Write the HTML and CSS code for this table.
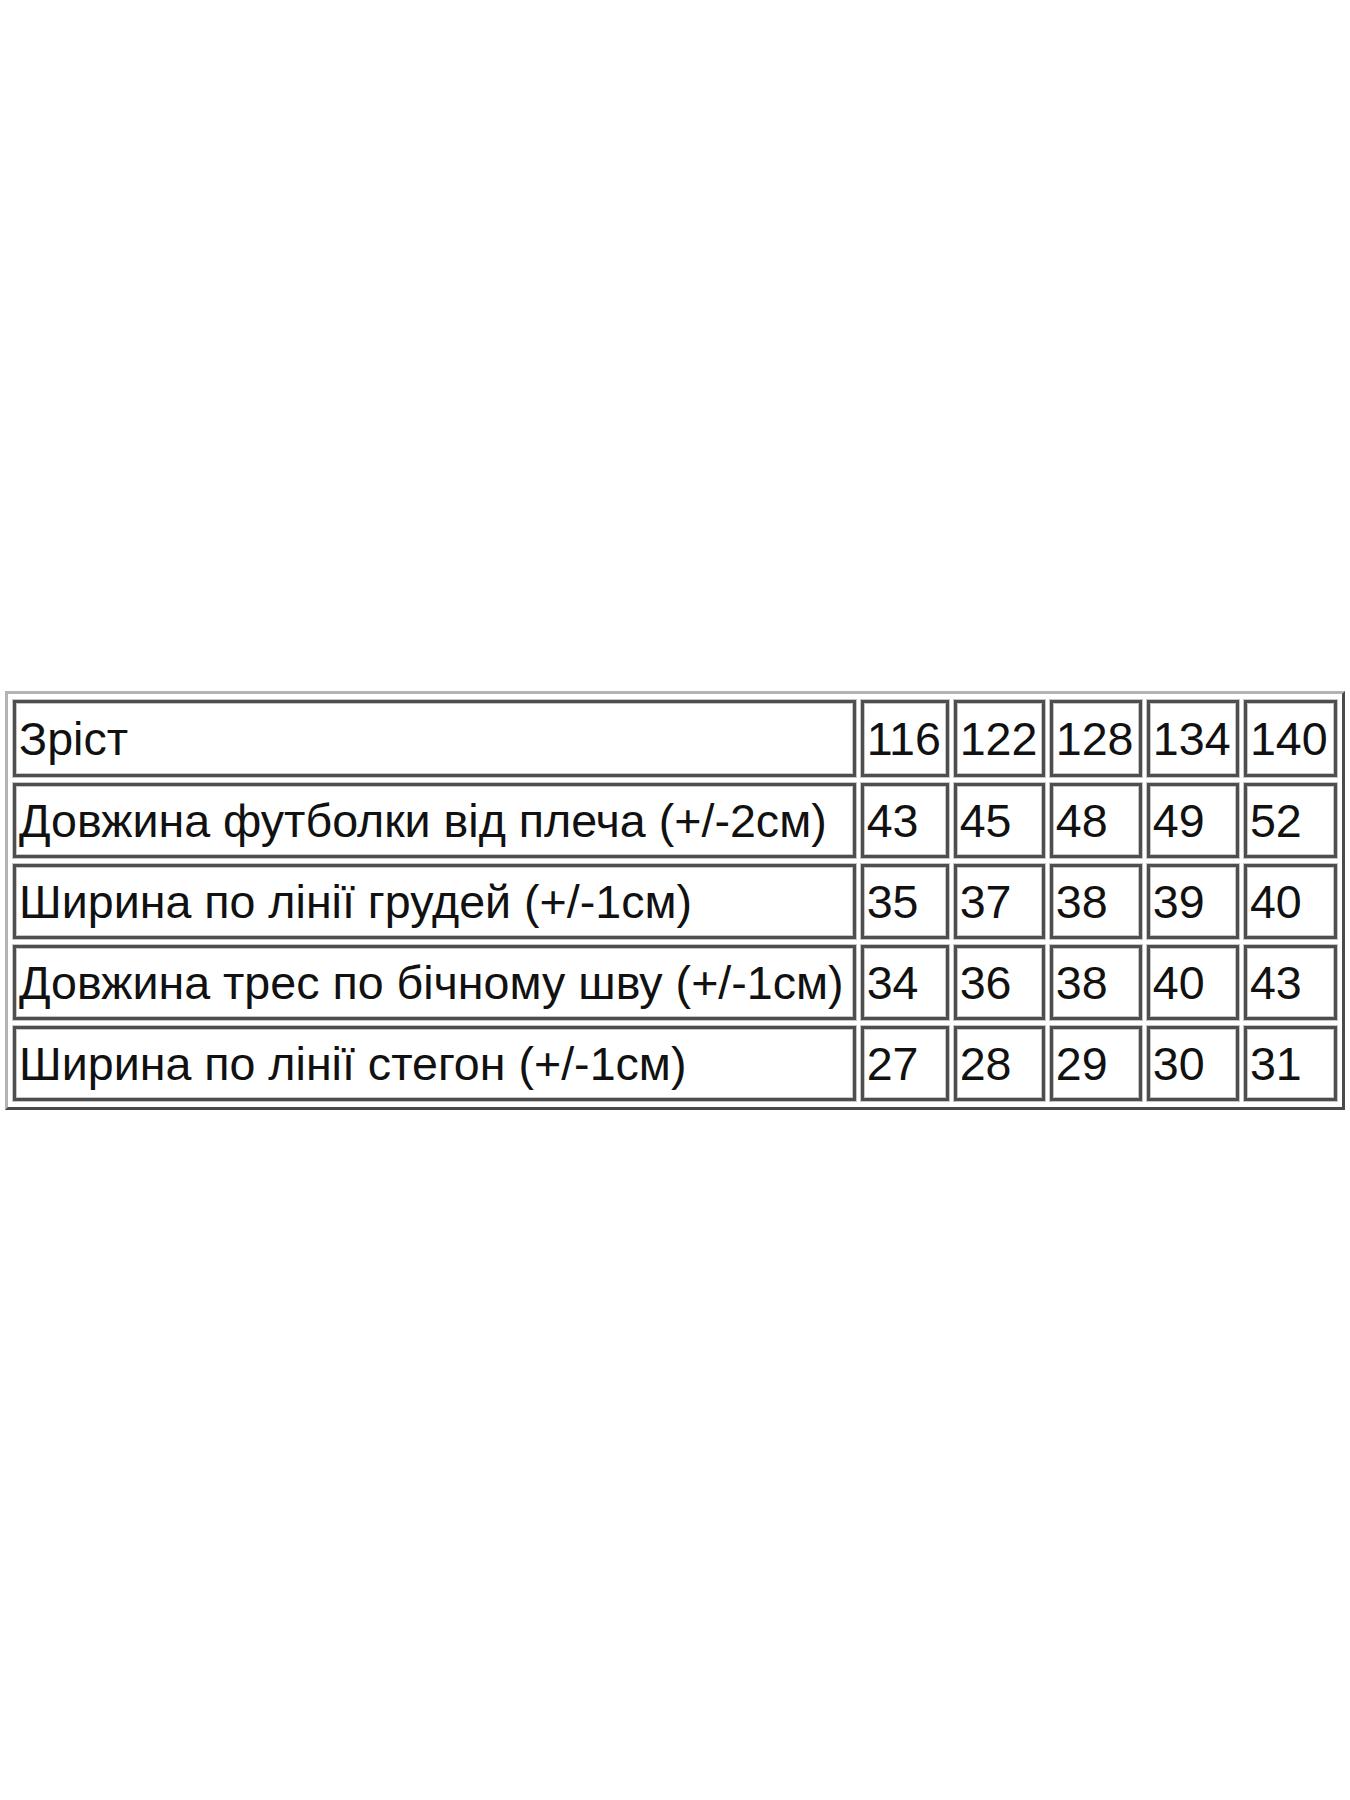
FILE: index.html
```html
<!DOCTYPE html>
<html lang="uk">
<head>
<meta charset="utf-8">
<title>Розмірна сітка</title>
<link rel="stylesheet" href="styles.css">
</head>
<body>
<main class="page">
  <table class="sizes">
    <tr class="head">
      <td class="c-name">Зріст</td>
      <td class="c-1">116</td>
      <td class="c-2">122</td>
      <td class="c-3">128</td>
      <td class="c-4">134</td>
      <td class="c-5">140</td>
    </tr>
    <tr>
      <td>Довжина футболки від плеча (+/-2см)</td>
      <td>43</td><td>45</td><td>48</td><td>49</td><td>52</td>
    </tr>
    <tr>
      <td>Ширина по лінії грудей (+/-1см)</td>
      <td>35</td><td>37</td><td>38</td><td>39</td><td>40</td>
    </tr>
    <tr>
      <td>Довжина трес по бічному шву (+/-1см)</td>
      <td>34</td><td>36</td><td>38</td><td>40</td><td>43</td>
    </tr>
    <tr>
      <td>Ширина по лінії стегон (+/-1см)</td>
      <td>27</td><td>28</td><td>29</td><td>30</td><td>31</td>
    </tr>
  </table>
</main>
</body>
</html>
```
FILE: styles.css
```css
html, body {
  margin: 0;
  padding: 0;
  background: #ffffff;
}

.page {
  height: 1800px;
  display: flex;
  align-items: center;
  justify-content: center;
}

.sizes {
  table-layout: fixed;
  width: 1340px;
  border-collapse: separate;
  border-spacing: 5px 6px;
  border: 3px solid;
  border-color: #b4b4b4 #4a4a4a #4a4a4a #b4b4b4;
  font-family: "Liberation Sans", Arial, sans-serif;
  font-size: 46.6px;
  color: #111111;
}

.sizes td {
  box-sizing: border-box;
  height: 75px;
  padding: 3px 4px 0 3px;
  border: 3px solid #4e4e4e;
  box-shadow: 0 0 0 1px #c6c6c6, inset 0 0 0 1px #c6c6c6;
  text-align: left;
  vertical-align: middle;
  white-space: nowrap;
  line-height: 1.1;
}

.sizes .head td {
  height: 77px;
}

.c-name { width: 842px; }
.c-1 { width: 88px; }
.c-2 { width: 91px; }
.c-3 { width: 92px; }
.c-4 { width: 92px; }
.c-5 { width: 93px; }
```
